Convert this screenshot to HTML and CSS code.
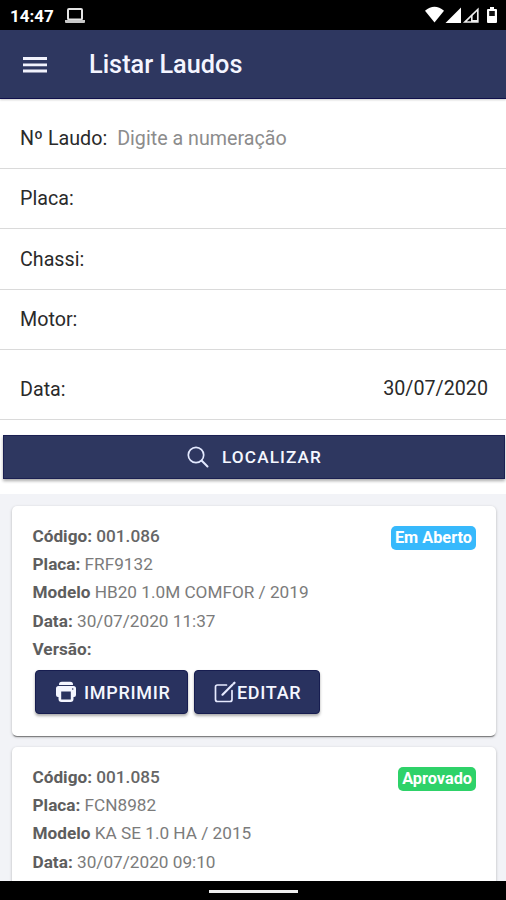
FILE: index.html
```html
<!DOCTYPE html>
<html lang="pt-BR">
<head>
<meta charset="utf-8">
<title>Listar Laudos</title>
<link rel="stylesheet" href="styles.css">
</head>
<body>
<div class="statusbar">
  <span class="clock">14:47</span>
  <svg class="laptop" width="20" height="16" viewBox="0 0 20 16"><rect x="3" y="1" width="14" height="10.500" rx="1" fill="none" stroke="#e4e4e4" stroke-width="2"/><path d="M0 12h20v2a1 1 0 0 1-1 1H1a1 1 0 0 1-1-1z" fill="#c8c8c8"/></svg>
  <svg class="signals" width="74" height="18" viewBox="0 0 74 18"><path d="M0 4.800Q9.500-3.200 19 4.800L9.500 16.500z" fill="#fff"/><path d="M36 1.500v15.500H20.500z" fill="#fff"/><path d="M52.800 3.500v12.500H40z" fill="none" stroke="#eee" stroke-width="1.700"/><path d="M46 9h1.600v7H46zM46 14h6v2h-6z" fill="#eee"/><path d="M65 1h4v2h2a1 1 0 0 1 1 1v12a1 1 0 0 1-1 1h-8a1 1 0 0 1-1-1V4a1 1 0 0 1 1-1h2z" fill="#fff"/><path d="M64.200 5h5.600v5h-5.600z" fill="#111"/></svg>
</div>
<header class="toolbar">
  <svg width="24" height="18" viewBox="0 0 24 18"><path d="M0 2.500h24M0 8.800h24M0 15h24" stroke="#f1f2fc" stroke-width="2.800"/></svg>
  <h1>Listar Laudos</h1>
</header>
<main>
  <form class="filters">
    <div class="field first"><label>Nº Laudo:</label><span class="hint">Digite a numeração</span></div>
    <div class="field"><label>Placa:</label></div>
    <div class="field tall"><label>Chassi:</label></div>
    <div class="field"><label>Motor:</label></div>
    <div class="field date"><label>Data:</label><span class="value">30/07/2020</span></div>
    <button type="button" class="search"><svg width="22" height="22" viewBox="0 0 22 22" fill="none" stroke="#e3e9ff" stroke-width="1.700" stroke-linecap="round"><circle cx="9" cy="9" r="7.700"/><path d="M14.800 14.800l5.700 5.700" stroke-width="2"/></svg><span>LOCALIZAR</span></button>
  </form>
  <section class="list">
    <article class="card">
      <div class="lines">
        <p class="code"><b>Código:</b> 001.086</p>
        <p><b>Placa:</b> FRF9132</p>
        <p><b>Modelo</b> HB20 1.0M COMFOR / 2019</p>
        <p><b>Data:</b> 30/07/2020 11:37</p>
        <p><b>Versão:</b></p>
        <div class="actions">
          <button type="button" class="print"><svg width="22" height="22" viewBox="0 0 22 22"><path d="M7 .8h8A3 3 0 0 1 18 4H4A3 3 0 0 1 7 .800z" fill="#f4f6ff"/><path d="M3.500 5h15A2.500 2.500 0 0 1 21 7.500V14a2 2 0 0 1-2 2h-.5v2a3 3 0 0 1-3 3h-9a3 3 0 0 1-3-3v-2H3a2 2 0 0 1-2-2V7.500A2.500 2.500 0 0 1 3.500 5z" fill="#f4f6ff"/><path d="M6.200 10.500h9.600v8H6.200z" fill="#29325f"/><circle cx="17.700" cy="8" r=".8" fill="#29325f"/></svg><span>IMPRIMIR</span></button>
          <button type="button" class="edit"><svg width="22" height="22" viewBox="0 0 22 22" fill="none" stroke="#e6eaff" stroke-width="1.700" stroke-linecap="round" stroke-linejoin="round"><path d="M12.500 4H3.500A2 2 0 0 0 1.500 6v12.500a2 2 0 0 0 2 2H16a2 2 0 0 0 2-2V9.500"/><path d="M8.500 13.700L18.200 4M19.600 2.600l.9-.9" stroke-width="2.200"/></svg><span>EDITAR</span></button>
        </div>
      </div>
      <span class="badge open">Em Aberto</span>
    </article>
    <article class="card">
      <div class="lines">
        <p class="code"><b>Código:</b> 001.085</p>
        <p><b>Placa:</b> FCN8982</p>
        <p><b>Modelo</b> KA SE 1.0 HA / 2015</p>
        <p><b>Data:</b> 30/07/2020 09:10</p>
      </div>
      <span class="badge approved">Aprovado</span>
    </article>
  </section>
</main>
<footer class="navbar"><i></i></footer>
</body>
</html>
```
FILE: styles.css
```css
* { box-sizing: border-box; }
body { margin: 0; height: 900px; display: flex; flex-direction: column; overflow: hidden; background: #fff; font-family: Roboto, sans-serif; }
p, h1 { margin: 0; }
svg { display: block; flex: none; }
button { border: 0; padding: 0; font-family: inherit; color: #f5f7ff; background: #2e3760; display: flex; align-items: center; }
.statusbar { height: 30px; flex: none; background: #000; color: #fff; display: flex; align-items: center; padding: 2px 8px 0 10px; }
.clock { font-size: 17px; font-weight: 700; letter-spacing: 0; width: 55px; margin-top: -1px; }
.signals { margin-left: auto; margin-top: -2px; margin-right: -1px; }
.toolbar { height: 69px; flex: none; background: #2e3760; border-bottom: 1px solid #10104c; display: flex; align-items: center; padding: 2px 23px 0; gap: 42px; box-shadow: 0 1px 2px #0003; }
.toolbar h1 { font-size: 25.3px; font-weight: 500; line-height: 30px; color: #f4f5ff; }
main { flex: 1; min-height: 0; overflow: hidden; display: flex; flex-direction: column; }
.filters { flex: none; height: 395px; display: flex; flex-direction: column; }
.field { height: 60px; flex: none; border-bottom: 1px solid #dadada; display: flex; align-items: center; padding: 0 18px 0 20px; font-size: 19.7px; color: #2a2a2a; }
.field.first { height: 70px; padding-top: 9px; }
.field.tall { height: 61px; }
.field.date { height: 70px; padding-top: 10px; }
.hint { margin-left: 10px; color: #8c8c8c; }
.value { margin-left: auto; margin-top: -3px; }
.search { height: 44px; flex: none; margin: 15px 1px 0 3px; padding-left: 1px; justify-content: center; gap: 13px; font-size: 17.2px; font-weight: 500; letter-spacing: 1.1px; border: 1px solid #1b2052; box-shadow: 0 2px 3px #0005; }
.list { flex: none; background: #f2f3f7; padding: 12px 10px 0 12px; display: flex; flex-direction: column; gap: 11px; }
.card { height: 230px; flex: none; background: #fff; border-radius: 5px; padding: 16px 20px 0 20.5px; display: flex; justify-content: space-between; align-items: flex-start; box-shadow: 0 2px 1px -1px #0006, 0 1px 3px #0004; }
.lines { font-size: 17.2px; line-height: 28.2px; color: #7b7b7b; white-space: nowrap; }
.lines b { font-weight: 700; color: #5e5e5e; }
.lines .code { font-weight: 500; color: #666; }
.badge { margin-top: 4px; height: 24px; line-height: 23px; border-radius: 5px; padding: 0 4px; color: #fff; font-size: 16.3px; font-weight: 700; }
.open { background: #37b9fc; }
.approved { background: #2ed269; }
.actions { display: flex; gap: 6px; margin: 7px 0 0 2.5px; }
.actions button { height: 44px; border-radius: 4px; background: #29325f; border: 1px solid #171d50; justify-content: flex-start; font-size: 18px; font-weight: 500; letter-spacing: .7px; box-shadow: 0 2px 3px #0005; }
.actions .print { width: 153px; gap: 7px; padding-left: 19px; }
.actions .edit { width: 126px; gap: 1px; padding-left: 19px; }
.navbar { height: 19px; flex: none; background: #000; display: flex; justify-content: center; align-items: center; }
.navbar i { width: 89px; height: 3px; background: #eee; margin-top: 2px; }
```
